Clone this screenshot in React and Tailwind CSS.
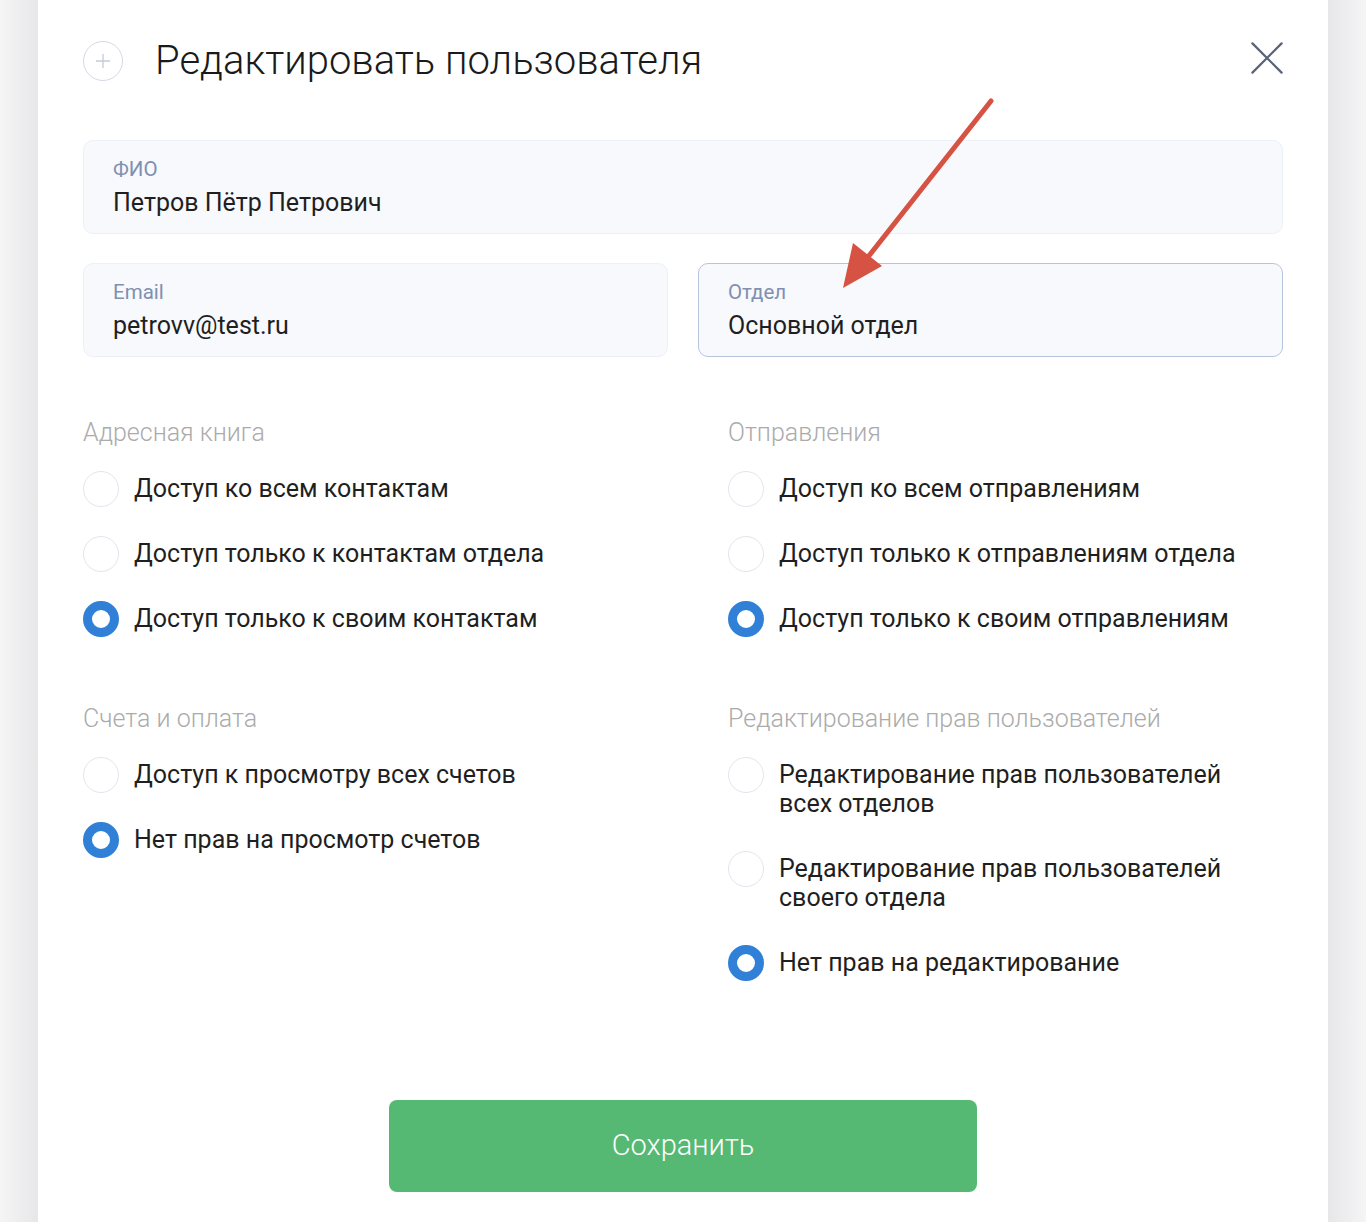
import React, { useState } from 'react'

// Форма редактирования пользователя: поля профиля + группы прав доступа

const groups = [
  {
    title: 'Адресная книга',
    name: 'contacts',
    options: [
      'Доступ ко всем контактам',
      'Доступ только к контактам отдела',
      'Доступ только к своим контактам',
    ],
    initial: 2,
  },
  {
    title: 'Отправления',
    name: 'shipments',
    options: [
      'Доступ ко всем отправлениям',
      'Доступ только к отправлениям отдела',
      'Доступ только к своим отправлениям',
    ],
    initial: 2,
  },
  {
    title: 'Счета и оплата',
    name: 'billing',
    options: ['Доступ к просмотру всех счетов', 'Нет прав на просмотр счетов'],
    initial: 1,
  },
  {
    title: 'Редактирование прав пользователей',
    name: 'rights',
    options: [
      'Редактирование прав пользователей всех отделов',
      'Редактирование прав пользователей своего отдела',
      'Нет прав на редактирование',
    ],
    initial: 2,
  },
]

function Field({ label, value, active }) {
  return (
    <div
      className={`h-[94px] rounded-[10px] border bg-[#f7f9fd] px-[29px] flex flex-col justify-center ${
        active ? 'border-[#b7c4dd]' : 'border-[#edf0f6]'
      }`}
    >
      <div className="text-[20.5px] leading-6 text-[#7f90b0]">{label}</div>
      <div className="mt-[7px] text-[25px] leading-[30px] text-[#1f1f1f]">{value}</div>
    </div>
  )
}

function Radio({ checked, label, onClick }) {
  return (
    <button type="button" onClick={onClick} className="flex items-start gap-[15px] text-left">
      {/* кружок центрируется по первой строке подписи */}
      <span className="shrink-0 w-9 h-[29px] flex items-center">
        <span
          className={`shrink-0 w-9 h-9 rounded-full bg-white ${
            checked ? 'border-[9px] border-[#2f80d6]' : 'border border-[#e1e5ed]'
          }`}
        />
      </span>
      <span className="text-[25px] leading-[29px] text-[#1f1f1f] max-w-[470px]">{label}</span>
    </button>
  )
}

function Group({ group }) {
  const [value, setValue] = useState(group.initial)
  return (
    <div>
      <div className="text-[25px] leading-7 font-light text-[#ababab]">{group.title}</div>
      <div className="mt-[27px] flex flex-col gap-[36px]">
        {group.options.map((opt, i) => (
          <Radio key={opt} label={opt} checked={value === i} onClick={() => setValue(i)} />
        ))}
      </div>
    </div>
  )
}

export default function App() {
  return (
    <div className="relative flex min-h-[1222px] font-['Roboto',sans-serif]">
      <div className="w-[38px] bg-gradient-to-r from-[#f5f5f6] to-[#e7e7e9]" />

      <div className="flex-1 bg-white px-[45px] pt-[38px] pb-[31px]">
        {/* шапка */}
        <div className="flex items-center">
          <div className="w-10 h-10 rounded-full border border-[#d3d9e5] flex items-center justify-center">
            <svg width="16" height="16" viewBox="0 0 16 16" fill="none">
              <path d="M8 1v14M1 8h14" stroke="#c3cad8" strokeWidth="1.3" />
            </svg>
          </div>
          <h1 className="ml-[32px] text-[40px] leading-[46px] font-light text-[#1a1a1a]">
            Редактировать пользователя
          </h1>
          <button type="button" className="ml-auto w-8 h-8 flex items-center justify-center -mt-[6px]">
            <svg width="34" height="34" viewBox="0 0 34 34" fill="none">
              <path d="M1.5 1.5l31 31M32.5 1.5l-31 31" stroke="#5a6478" strokeWidth="2.4" strokeLinecap="round" />
            </svg>
          </button>
        </div>

        {/* поля */}
        <div className="mt-[56px]">
          <Field label="ФИО" value="Петров Пётр Петрович" />
        </div>
        <div className="mt-[29px] grid grid-cols-2 gap-[30px]">
          <Field label="Email" value="petrovv@test.ru" />
          <Field label="Отдел" value="Основной отдел" active />
        </div>

        {/* права */}
        <div className="mt-[62px] grid grid-cols-[645px_1fr] gap-y-[72px]">
          {groups.map((g) => (
            <Group key={g.name} group={g} />
          ))}
        </div>

        <div className="mt-[123px] flex justify-center">
          <button
            type="button"
            className="w-[588px] h-[92px] rounded-[8px] bg-[#56b973] text-white text-[29px] font-light"
          >
            Сохранить
          </button>
        </div>
      </div>

      <div className="w-[38px] bg-gradient-to-l from-[#f5f5f6] to-[#e7e7e9]" />

      {/* стрелка-указатель на поле отдела */}
      <svg className="absolute left-0 top-0 pointer-events-none" width="1366" height="320">
        <path d="M991 101L868 257" stroke="#d65243" strokeWidth="5" strokeLinecap="round" />
        <path d="M843 288L853 243L882 266Z" fill="#d65243" />
      </svg>
    </div>
  )
}
